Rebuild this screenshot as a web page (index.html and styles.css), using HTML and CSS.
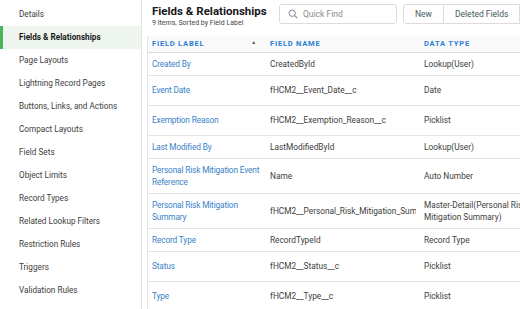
FILE: index.html
```html
<!DOCTYPE html>
<html>
	<head>
		<meta charset="UTF-8">
		<title>Fields &amp; Relationships</title>
		<link rel="stylesheet" href="styles.css">
	</head>
	<body>
		<div class="setup">
			<!-- left navigation -->
			<ul class="sidenav">
				<li>Details</li>
				<li class="active">Fields &amp; Relationships</li>
				<li>Page Layouts</li>
				<li>Lightning Record Pages</li>
				<li>Buttons, Links, and Actions</li>
				<li>Compact Layouts</li>
				<li>Field Sets</li>
				<li>Object Limits</li>
				<li>Record Types</li>
				<li>Related Lookup Filters</li>
				<li>Restriction Rules</li>
				<li>Triggers</li>
				<li>Validation Rules</li>
			</ul>

			<div class="content">
				<div class="head">
					<div class="head-title">
						<h1>Fields &amp; Relationships</h1>
						<p>9 Items, Sorted by Field Label</p>
					</div>
					<div class="search">
						<svg width="10" height="10" viewBox="0 0 10 10"><circle cx="4.2" cy="4.2" r="3.2" fill="none" stroke="#8a8a8a" stroke-width="1"/><path d="M6.5 6.5 L9.2 9.2" stroke="#8a8a8a" stroke-width="1.1"/></svg>
						<span>Quick Find</span>
					</div>
					<div class="btns">
						<a href="#">New</a>
						<a href="#">Deleted Fields</a>
						<a href="#">Field Dependencies</a>
					</div>
				</div>

				<div class="grid">
					<div class="row th">
						<div class="c1">FIELD LABEL <span class="sort">&#9650;</span></div>
						<div class="c2">FIELD NAME</div>
						<div class="c3">DATA TYPE</div>
					</div>
					<div class="row">
						<div class="c1"><a href="#">Created By</a></div>
						<div class="c2">CreatedById</div>
						<div class="c3">Lookup(User)</div>
					</div>
					<div class="row tall">
						<div class="c1"><a href="#">Event Date</a></div>
						<div class="c2">fHCM2__Event_Date__c</div>
						<div class="c3">Date</div>
					</div>
					<div class="row tall">
						<div class="c1"><a href="#">Exemption Reason</a></div>
						<div class="c2">fHCM2__Exemption_Reason__c</div>
						<div class="c3">Picklist</div>
					</div>
					<div class="row">
						<div class="c1"><a href="#">Last Modified By</a></div>
						<div class="c2">LastModifiedById</div>
						<div class="c3">Lookup(User)</div>
					</div>
					<div class="row two">
						<div class="c1"><a href="#">Personal Risk Mitigation Event Reference</a></div>
						<div class="c2">Name</div>
						<div class="c3">Auto Number</div>
					</div>
					<div class="row two">
						<div class="c1"><a href="#">Personal Risk Mitigation Summary</a></div>
						<div class="c2">fHCM2__Personal_Risk_Mitigation_Summary__c</div>
						<div class="c3">Master-Detail(Personal Risk Mitigation Summary)</div>
					</div>
					<div class="row">
						<div class="c1"><a href="#">Record Type</a></div>
						<div class="c2">RecordTypeId</div>
						<div class="c3">Record Type</div>
					</div>
					<div class="row tall">
						<div class="c1"><a href="#">Status</a></div>
						<div class="c2">fHCM2__Status__c</div>
						<div class="c3">Picklist</div>
					</div>
					<div class="row tall">
						<div class="c1"><a href="#">Type</a></div>
						<div class="c2">fHCM2__Type__c</div>
						<div class="c3">Picklist</div>
					</div>
				</div>
			</div>
		</div>
	</body>
</html>
```
FILE: styles.css
```css
*{
	margin: 0;
	padding: 0;
	list-style-type: none;
	box-sizing: border-box;
}

a{
	text-decoration: none;
}

body{
	font: 8.3px/1.5 Roboto, "Open Sans", sans-serif;
	color: #3e3e3c;
	background: #fff;
	overflow: hidden;
}

.setup{
	display: flex;
	width: 520px;
	height: 309px;
	overflow: hidden;
}

/* left menu */
.sidenav{
	width: 142px;
	flex: none;
	padding-top: 3px;
	border-right: 1px solid #e4e4e4;
	font-size: 8.2px;
}

.sidenav li{
	height: 23px;
	line-height: 23px;
	padding-left: 19px;
	color: #3e3e3c;
	white-space: nowrap;
}

.sidenav li.active{
	background: #eef4ee;
	border-left: 3px solid #4bb35a;
	padding-left: 16px;
	font-weight: bold;
	color: #1b1b1b;
}

/* right side */
.content{
	flex: 1;
	min-width: 0;
	padding-left: 5px;
}

.head{
	display: flex;
	align-items: flex-start;
	height: 36px;
	padding-top: 4px;
	white-space: nowrap;
}

.head-title{
	width: 132px;
	flex: none;
	padding-left: 5px;
}

.head-title h1{
	font-size: 11.5px;
	line-height: 14px;
	font-weight: bold;
	color: #16181a;
}

.head-title p{
	font-size: 7px;
	line-height: 10px;
	color: #444;
}

.search{
	display: flex;
	align-items: center;
	gap: 5px;
	width: 118px;
	height: 20px;
	padding-left: 8px;
	border: 1px solid #dcdcdc;
	border-radius: 3px;
	color: #8a8a8a;
	font-size: 8.5px;
	flex: none;
}

.btns{
	display: flex;
	flex: none;
	margin-left: 6px;
	border: 1px solid #dcdcdc;
	border-radius: 3px;
	height: 20px;
	font-size: 8.5px;
}

.btns a{
	display: block;
	padding: 0 11px;
	line-height: 18px;
	color: #3e5a5a;
	border-left: 1px solid #dcdcdc;
}

.btns a:first-child{
	border-left: 0;
}

/* table */
.grid{
	border-left: 1px solid #e4e4e4;
}

.row{
	display: flex;
	align-items: center;
	height: 23px;
	border-bottom: 1px solid #e4e4e4;
	white-space: nowrap;
}

.row.tall{
	height: 30px;
}

.row.two{
	height: 35px;
}

.row.th{
	height: 17px;
	background: #fafafa;
	border-bottom: 1px solid #dedede;
	font-weight: bold;
	font-size: 7.5px;
	letter-spacing: 0.8px;
	color: #2b7fd6;
}

.c1{
	width: 114px;
	flex: none;
	padding-left: 4px;
	position: relative;
}

.c1 a{
	color: #3a7fc8;
	letter-spacing: -0.15px;
}

.c2{
	width: 154px;
	flex: none;
	padding-left: 8px;
	overflow: hidden;
}

.c3{
	width: 122px;
	flex: none;
	padding-left: 8px;
}

.row.two .c1,
.row.two .c3{
	white-space: normal;
	line-height: 12px;
}

.sort{
	position: absolute;
	right: 5px;
	top: 1px;
	font-size: 5px;
	color: #555;
}
```
